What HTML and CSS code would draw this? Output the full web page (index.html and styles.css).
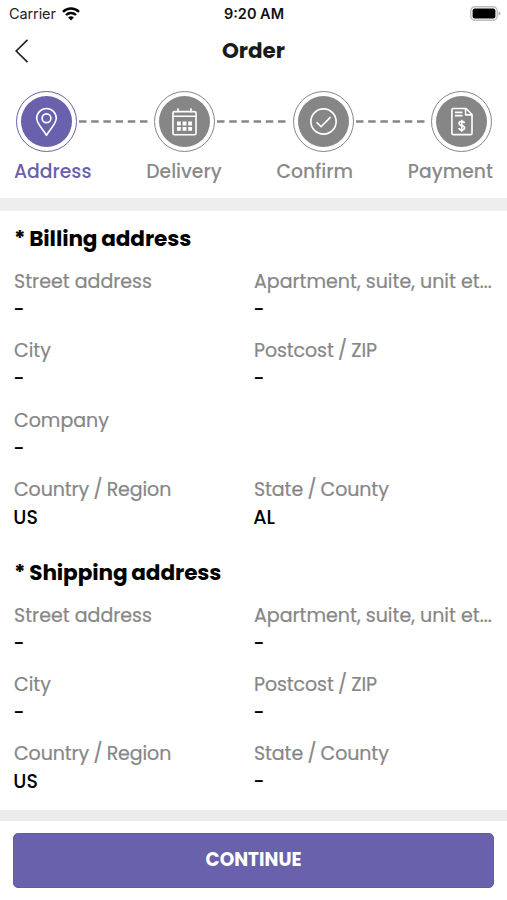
FILE: index.html
```html
<!DOCTYPE html>
<html lang="en">
<head>
<meta charset="utf-8">
<meta name="viewport" content="width=device-width, initial-scale=1">
<title>Order</title>
<link rel="stylesheet" href="styles.css">
</head>
<body>
<div class="screen">
  <header class="status">
    <div class="carrier"><span>Carrier</span>
      <svg width="18" height="14" viewBox="0 0 18 14"><path fill="none" stroke="#000" stroke-width="2.4" d="M1 4.8a11.5 11.5 0 0 1 16 0M4 8a7.2 7.2 0 0 1 10 0"/><path d="M9 13.5 6.1 10.6a4.2 4.2 0 0 1 5.8 0Z"/></svg>
    </div>
    <span class="time">9:20 AM</span>
    <svg class="battery" width="31" height="15" viewBox="0 0 31 15"><rect x=".8" y=".8" width="26.4" height="13.4" rx="4" fill="#fff" stroke="#bbb" stroke-width="1.4"/><rect x="2.6" y="2.6" width="22.8" height="9.8" rx="2"/><path d="M28.5 5.5v4q2-.7 2-2t-2-2" fill="#aaa"/></svg>
  </header>
  <nav class="nav">
    <svg class="back" width="16" height="26" viewBox="0 0 16 26"><path d="M13.5 1.8 2.2 13l11.3 11.2" fill="none" stroke="#222" stroke-width="1.7"/></svg>
    <h1>Order</h1>
  </nav>
  <section class="steps">
    <div class="track">
      <div class="step active"><svg viewBox="0 0 50 50"><path d="M25 38.5C21 32 15.4 27 15.4 21.8a9.6 9.6 0 0 1 19.2 0C34.6 27 29 32 25 38.5Z"/><circle cx="25" cy="21.8" r="4.3"/></svg></div>
      <svg class="dash" height="3" viewBox="0 0 73 3"><path d="M0 1.5h69"/></svg>
      <div class="step"><svg viewBox="0 0 50 50"><rect x="13.7" y="15.3" width="22.6" height="22.7" rx="1.5"/><path d="M14 19.8h22M18.6 12v4M31.4 12v4"/><path class="cells" d="M17.6 27h14.8M17.6 32.2h14.8"/></svg></div>
      <svg class="dash" height="3" viewBox="0 0 73 3"><path d="M0 1.5h69"/></svg>
      <div class="step"><svg viewBox="0 0 50 50"><circle cx="25" cy="25" r="12.4"/><path d="m18.2 25.7 4.4 4.4 9.3-9.4"/></svg></div>
      <svg class="dash" height="3" viewBox="0 0 73 3"><path d="M0 1.5h69"/></svg>
      <div class="step"><svg viewBox="0 0 50 50"><path d="M17 12.3h12.5l5.8 5.8v18.4q0 1.4-1.4 1.4H17q-1.4 0-1.4-1.4V13.7q0-1.4 1.4-1.4ZM29 12.5v6h6M18.5 16h7.5M18.5 19.3h7.5"/><path d="M28 26.6c-.4-1.2-1.4-1.7-2.7-1.7-1.6 0-2.7.8-2.7 2 0 2.8 5.4 1.4 5.4 4.3 0 1.3-1.1 2.1-2.7 2.1-1.5 0-2.6-.7-2.9-1.9M25.3 23.2v11.8"/></svg></div>
    </div>
    <div class="names"><span class="current">Address</span><span>Delivery</span><span>Confirm</span><span>Payment</span></div>
  </section>
  <main class="details">
    <section>
      <h2>* Billing address</h2>
      <dl class="fields">
        <div><dt>Street address</dt><dd>-</dd></div>
        <div><dt>Apartment, suite, unit et...</dt><dd>-</dd></div>
        <div><dt>City</dt><dd>-</dd></div>
        <div><dt class="pair">Postcost / ZIP</dt><dd>-</dd></div>
        <div class="wide"><dt>Company</dt><dd>-</dd></div>
        <div><dt class="pair">Country / Region</dt><dd>US</dd></div>
        <div><dt class="pair">State / County</dt><dd>AL</dd></div>
      </dl>
    </section>
    <section>
      <h2>* Shipping address</h2>
      <dl class="fields">
        <div><dt>Street address</dt><dd>-</dd></div>
        <div><dt>Apartment, suite, unit et...</dt><dd>-</dd></div>
        <div><dt>City</dt><dd>-</dd></div>
        <div><dt class="pair">Postcost / ZIP</dt><dd>-</dd></div>
        <div><dt class="pair">Country / Region</dt><dd>US</dd></div>
        <div><dt class="pair">State / County</dt><dd>-</dd></div>
      </dl>
    </section>
  </main>
  <footer class="footer"><button type="button">CONTINUE</button></footer>
</div>
</body>
</html>
```
FILE: styles.css
```css
* { box-sizing: border-box; }
body { margin: 0; background: #fff; color: #000; font-family: Poppins, Inter, "Liberation Sans", sans-serif; }
h1, h2, dl, dd { margin: 0; }
.screen { width: 507px; height: 900px; display: flex; flex-direction: column; overflow: hidden; }
.status { height: 27px; padding: 0 6px 0 9px; display: grid; grid-template-columns: 1fr auto 1fr; align-items: center; font: 14.5px/27px Inter, sans-serif; }
.carrier { display: flex; align-items: center; gap: 6px; color: #222; letter-spacing: -.1px; }
.time { font-weight: 600; color: #111; position: relative; left: -1px; }
.battery { justify-self: end; }
.nav { height: 47px; padding: 0 14px; display: grid; grid-template-columns: 1fr auto 1fr; align-items: center; }
h1 { font-size: 21.5px; line-height: 30px; font-weight: 700; color: #1a1a1a; }
.steps { height: 137px; padding: 17px 14px 0; border-bottom: 13px solid #eee; }
.track { display: flex; align-items: center; justify-content: space-between; padding: 0 1px 0 2px; }
.step { width: 61px; height: 61px; border: 1.5px solid #868686; border-radius: 50%; padding: 4px; color: #868686; flex: none; }
.step svg { display: block; width: 100%; height: 100%; border-radius: 50%; background: #868686; fill: none; stroke: #fff; stroke-width: 1.6; stroke-linejoin: round; }
.step.active { border-color: #6961ab; }
.step.active svg { background: #6961ab; }
.step .cells { stroke-width: 3.8; stroke-dasharray: 3.8 1.7; }
.dash { width: 73px; stroke: #868686; stroke-width: 2.4; stroke-dasharray: 7.5 4.7; }
.names { display: flex; justify-content: space-between; margin-top: 6px; font-size: 18.8px; line-height: 28px; font-weight: 500; color: #8a8a8a; }
.names .current { color: #6961ab; }
.details { height: 599px; padding: 12px 14px 0; }
h2 { font-size: 21.6px; line-height: 32px; font-weight: 700; letter-spacing: -.1px; word-spacing: -.7px; margin-bottom: 12px; white-space: nowrap; }
.fields { display: grid; grid-template-columns: 240px 239px; row-gap: 11.9px; margin-bottom: 24.5px; font-size: 19px; }
.fields .wide { grid-column: 1 / -1; }
dt { line-height: 29px; color: #868686; white-space: nowrap; -webkit-text-stroke: .2px #868686; }
.pair { letter-spacing: -.1px; word-spacing: -.7px; }
dd { line-height: 28.4px; font-weight: 500; margin-left: -.7px; }
.footer { flex: 1; padding: 23px 13px 12px; box-shadow: inset 0 11px #ebebeb; }
button { display: block; width: 100%; height: 55px; border: 1px solid #625aa6; border-radius: 5px; background: #6961ab; color: #fff; font: 700 18.5px/50px Poppins, Inter, sans-serif; padding: 0 0 2px; }
```
